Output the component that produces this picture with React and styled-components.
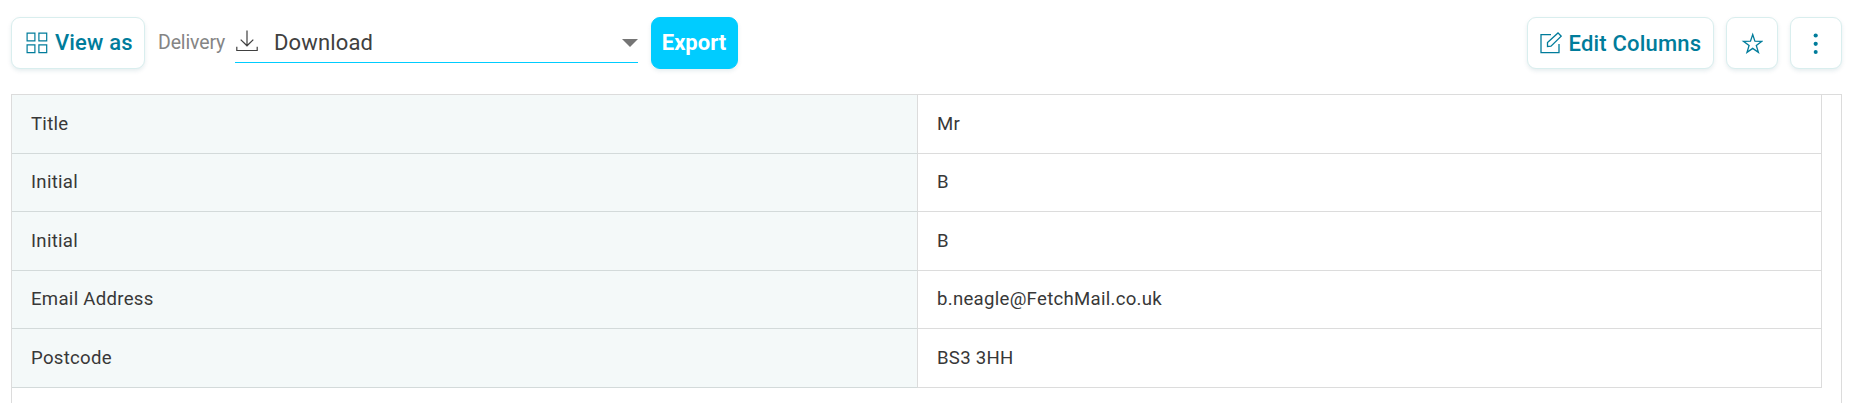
import React from 'react';
import styled, { createGlobalStyle } from 'styled-components';

const GlobalStyle = createGlobalStyle`
  *, *::before, *::after { box-sizing: border-box; }
  html, body, #root { height: 100%; }
  body {
    margin: 0;
    overflow: hidden;
    background: #fff;
    font-family: Roboto, "Liberation Sans", sans-serif;
  }
`;

const Page = styled.main`
  display: flex;
  flex-direction: column;
  height: 100%;
  padding: 17px 12px 0 11px;
`;

const Toolbar = styled.header`
  display: flex;
  justify-content: space-between;
  height: 52px;
  margin-bottom: 25px;
  flex: none;
`;

const Group = styled.div`
  display: flex;
  align-items: center;
  gap: ${({ $gap }) => $gap || 0}px;
`;

const Button = styled.button`
  display: flex;
  align-items: center;
  justify-content: ${({ $start }) => ($start ? 'flex-start' : 'center')};
  gap: ${({ $gap }) => $gap || 0}px;
  width: ${({ $width }) => $width}px;
  height: 52px;
  padding: ${({ $start }) => ($start ? `0 0 0 ${$start}px` : 0)};
  border: 1px solid #d9eeee;
  border-radius: 9px;
  background: #fff;
  box-shadow: 0 2px 4px rgba(0, 80, 100, 0.1);
  color: #007c9b;
  font: 500 22px/26px Roboto, sans-serif;
  letter-spacing: ${({ $track }) => $track || 0}px;
  white-space: nowrap;
`;

const ExportButton = styled(Button)`
  border-color: #0cf;
  background: #0cf;
  color: #fff;
  font-weight: 700;
  padding-right: 1px;
`;

const ButtonText = styled.span`
  padding-top: ${({ $drop }) => $drop || 0}px;
`;

const Label = styled.span`
  width: 77px;
  padding-left: 13px;
  color: #858585;
  font-size: 19.5px;
  line-height: 24px;
  letter-spacing: -0.15px;
  white-space: nowrap;
`;

const Select = styled.div`
  display: flex;
  align-items: center;
  align-self: flex-start;
  width: 403px;
  height: 46px;
  margin: 0 13px;
  padding: 2px 0 0 1px;
  border-bottom: 1px solid #0cf;
  color: #404040;
  font-size: 22px;
  line-height: 26px;
  letter-spacing: 0.15px;
`;

const SelectValue = styled.span`
  flex: 1;
  padding: 4px 0 0 16px;
`;

const Caret = styled.span`
  margin-top: 5px;
  border: 8px solid transparent;
  border-top-color: #757575;
  border-bottom: 0;
`;

const Frame = styled.section`
  flex: 1;
  padding-right: 19px;
  border: 1px solid #dcdcdc;
  border-bottom: 0;
`;

const Row = styled.div`
  display: grid;
  grid-template-columns: 906px 1fr;
  height: 58.6px;
`;

const Cell = styled.div`
  display: flex;
  align-items: center;
  padding-left: 19px;
  border-right: 1px solid #dcdcdc;
  border-bottom: 1px solid ${({ $head }) => ($head ? '#d3dada' : '#dcdcdc')};
  background: ${({ $head }) => ($head ? '#f4f9f9' : '#fff')};
  color: #383838;
  font-size: 18.6px;
  line-height: 24.4px;
  letter-spacing: 0.28px;
`;

const Icon = ({ size, children, ...rest }) => (
  <svg width={size} height={size} viewBox={`0 0 ${size} ${size}`} fill="none" stroke="currentColor" {...rest}>
    {children}
  </svg>
);

const GridIcon = () => (
  <Icon size={22}>
    <path strokeWidth="1.2" d="M1.1 1.1h7.8v7.8H1.1zM12.9 1.1h7.8v7.8h-7.8zM1.1 12.9h7.8v7.8H1.1zM12.9 12.9h7.8v7.8h-7.8z" />
  </Icon>
);

const DownloadIcon = () => (
  <Icon size={22} strokeWidth="1.2">
    <path d="M11 .5v15M4.700 9.600l6.300 6.200 6.300-6.200M.8 16.800v3.700h20.4v-3.700" />
  </Icon>
);

const EditIcon = () => (
  <Icon size={22} strokeWidth="1.3">
    <path d="M11 2.700H1v18h18V12" />
    <path d="M7.500 14.500v-4L18 .9l3.200 3.300L11 14.200z" />
  </Icon>
);

const StarIcon = () => (
  <Icon size={22} strokeWidth="1.3">
    <path d="M11.700 2.500l2.200 6.700 7 .1-5.600 4.200 2.100 6.900-5.700-4-5.700 4 2.100-6.900-5.600-4.200 7-.1z" />
  </Icon>
);

const MoreIcon = () => (
  <Icon size={22} stroke="none" fill="currentColor">
    <circle cx="10.700" cy="3.500" r="2.100" />
    <circle cx="10.700" cy="11.800" r="2.100" />
    <circle cx="10.700" cy="20" r="2" />
  </Icon>
);

const rows = [
  ['Title', 'Mr'],
  ['Initial', 'B'],
  ['Initial', 'B'],
  ['Email Address', 'b.neagle@FetchMail.co.uk'],
  ['Postcode', 'BS3 3HH'],
];

export default function App() {
  return (
    <>
      <GlobalStyle />
      <Page>
        <Toolbar>
          <Group>
            <Button $width={134} $start={14} $gap={7} $track={0.15}>
              <GridIcon />
              <ButtonText>View as</ButtonText>
            </Button>
            <Label>Delivery</Label>
            <Select>
              <DownloadIcon />
              <SelectValue>Download</SelectValue>
              <Caret />
            </Select>
            <ExportButton $width={87}>Export</ExportButton>
          </Group>
          <Group $gap={12}>
            <Button $width={187} $start={12} $gap={6.5} $track={0.2}>
              <EditIcon />
              <ButtonText $drop={2}>Edit Columns</ButtonText>
            </Button>
            <Button $width={52} aria-label="Favourite">
              <StarIcon />
            </Button>
            <Button $width={52} aria-label="More">
              <MoreIcon />
            </Button>
          </Group>
        </Toolbar>
        <Frame>
          {rows.map(([name, value], i) => (
            <Row key={i}>
              <Cell $head>{name}</Cell>
              <Cell>{value}</Cell>
            </Row>
          ))}
        </Frame>
      </Page>
    </>
  );
}
